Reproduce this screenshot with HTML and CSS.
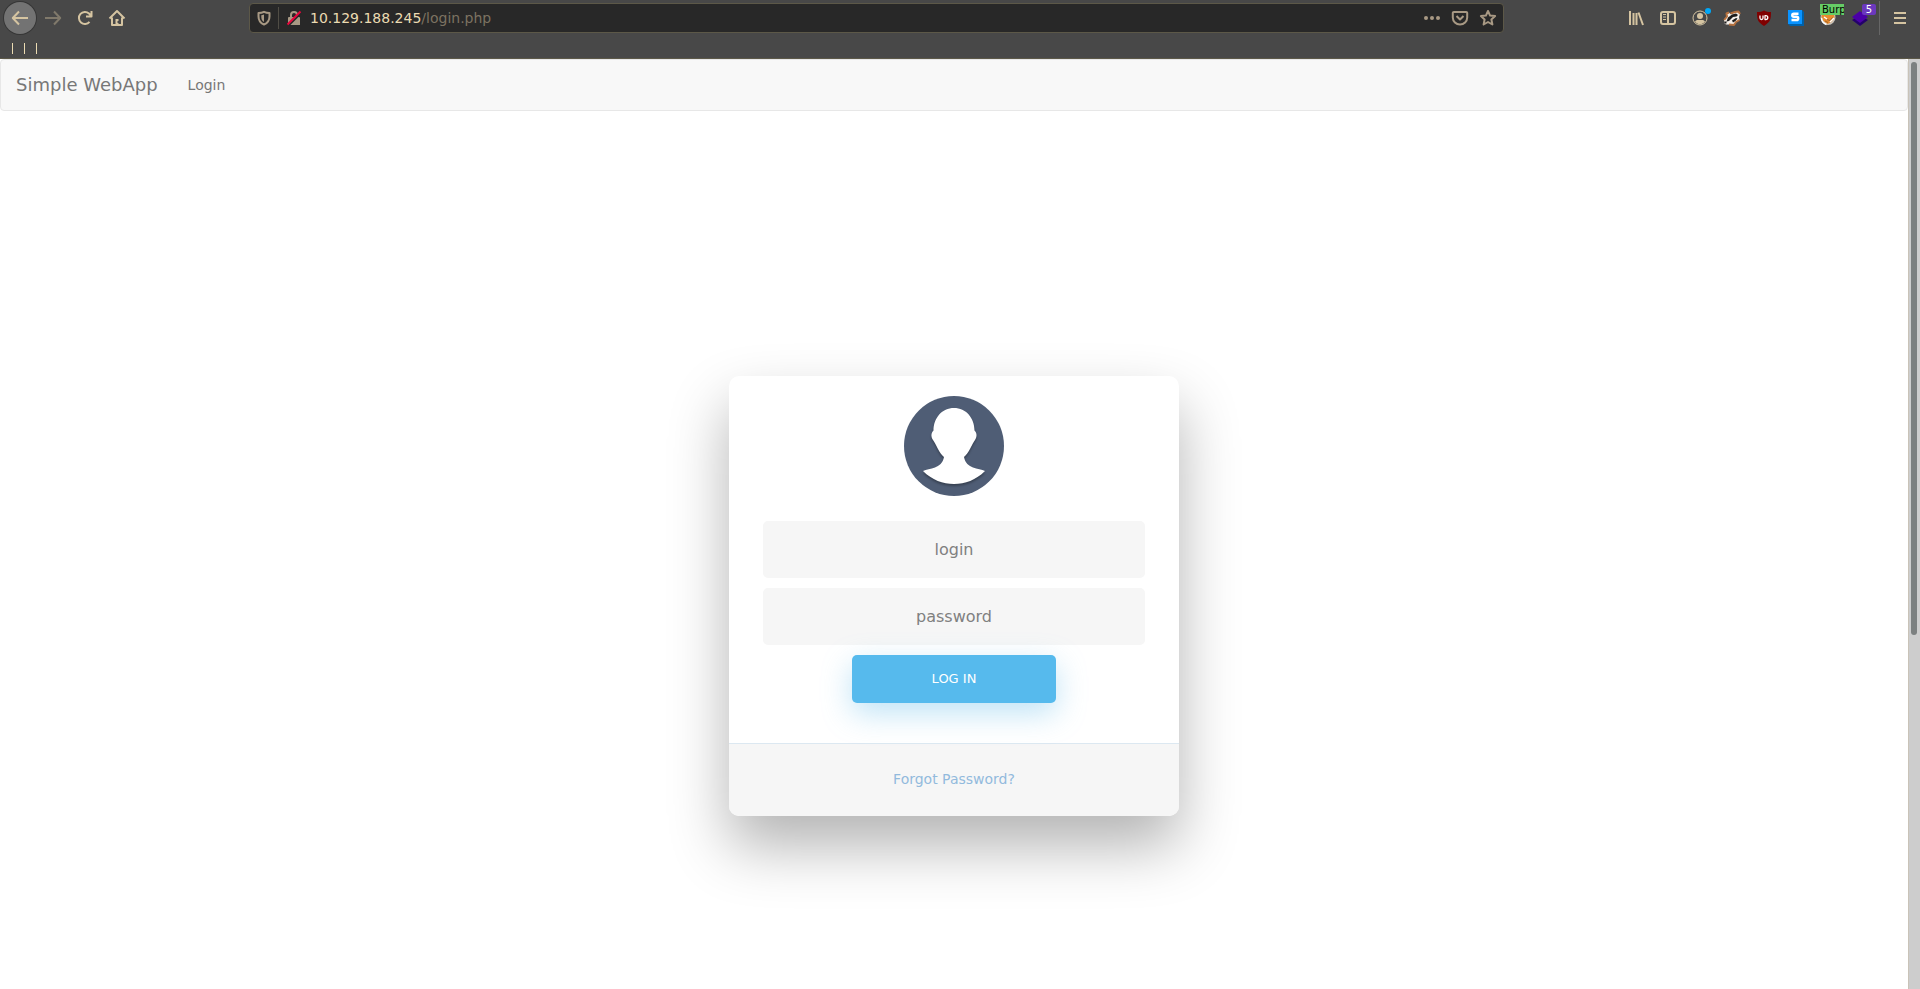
FILE: index.html
```html
<!DOCTYPE html>
<html lang="en">
<head>
  <meta charset="UTF-8">
  <meta name="viewport" content="width=device-width, initial-scale=1.0">
  <title>Simple WebApp - Login</title>
  <link rel="stylesheet" href="styles.css">
</head>
<body>
  <header class="browser">
    <div class="toolbar">
      <button type="button" class="tool tool-back" aria-label="Back">
        <svg width="18" height="18" viewBox="0 0 18 18"><path d="M17 9H2M8 2.500L1.800 9L8 15.500" /></svg>
      </button>
      <button type="button" class="tool tool-off" aria-label="Forward">
        <svg width="18" height="18" viewBox="0 0 18 18"><path d="M1 9h15M10 2.500L16.200 9L10 15.500" /></svg>
      </button>
      <button type="button" class="tool" aria-label="Reload">
        <svg width="18" height="18" viewBox="0 0 18 18"><path d="M13.500 12.800A6 6 0 1 1 13 4.500L15 6.500M15.500 2v5.500H10" /></svg>
      </button>
      <button type="button" class="tool" aria-label="Home">
        <svg width="18" height="18" viewBox="0 0 18 18"><path d="M1.500 9.500L9 2l7.500 7.500M4 8.500V16h10V8.500" /><path class="fill" d="M7.500 10h3v2h-1v2h1v2h-3z" /></svg>
      </button>

      <div class="spacer"></div>
      <div class="urlbar">
        <svg class="url-icon" width="16" height="16" viewBox="0 0 16 16"><path d="M8 1.800C6 2.800 4.500 3 2.500 3v3.500c0 4 1.800 6.500 5.500 8 3.700-1.500 5.500-4 5.500-8V3C11.500 3 10 2.800 8 1.800z" /><path class="fill" d="M8 4.500c-1 .4-1.700.6-2.700.7v1.500c0 2.500.8 4.200 2.700 5.300z" /></svg>
        <span class="url-line"></span>
        <svg class="url-icon" width="16" height="16" viewBox="0 0 16 16"><path d="M5 8V5a3 3 0 0 1 6 0v3" /><path class="fill" d="M3 7h10a1 1 0 0 1 1 1v7H2V8a1 1 0 0 1 1-1z" /><path class="cut" d="M2.500 15.500L15 3" /><path class="slash" d="M1.500 14.500L14.500 1.500" /></svg>
        <div class="url"><span>10.129.188.245</span>/login.php</div>
        <div class="url-actions">
          <svg width="18" height="16" viewBox="0 0 18 16"><circle class="fill" cx="3" cy="8" r="2" /><circle class="fill" cx="9" cy="8" r="2" /><circle class="fill" cx="15" cy="8" r="2" /></svg>
          <svg width="18" height="16" viewBox="0 0 18 16"><path d="M2.800 2h12.400a1 1 0 0 1 1 1v4.500a7.200 7 0 0 1-14.400 0V3a1 1 0 0 1 1-1zM5.500 6L9 9.500 12.500 6" /></svg>
          <svg width="18" height="16" viewBox="0 0 18 16"><path d="M9 1l2.100 4.600 5 .5-3.700 3.400 1 5L9 12l-4.400 2.500 1-5L1.900 6.100l5-.5z" /></svg>
        </div>
      </div>
      <div class="spacer"></div>

      <button type="button" class="tool" aria-label="Library">
        <svg width="18" height="18" viewBox="0 0 18 18"><path d="M3 2v14M6.500 4v12M9.500 4v12M11.500 3.500L16 16" /></svg>
      </button>
      <button type="button" class="tool" aria-label="Sidebars">
        <svg width="18" height="18" viewBox="0 0 18 18"><rect x="2" y="3" width="14" height="12" rx="2" /><path d="M9 3v12" /><path class="thin" d="M4 5.500h3M4 8h3M4 10.500h3" /></svg>
      </button>
      <button type="button" class="tool" aria-label="Account">
        <svg width="18" height="18" viewBox="0 0 18 18"><circle class="thin" cx="9" cy="9" r="7" /><circle class="fill" cx="9" cy="7" r="3" /><path class="fill" d="M4 12.500c1-1.500 2-1.500 3-1.500h4c1 0 2 0 3 1.500a6 6 0 0 1-10 0z" /></svg>
        <span class="dot"></span>
      </button>
      <button type="button" class="tool" aria-label="Privacy Badger">
        <svg class="art" width="18" height="18" viewBox="0 0 18 18">
          <path fill="#f4eee8" d="M1 11.500L4 7L3.500 4.500L6 3.500L7.500 5L12 3L15.500 2.500L17 5L16 8L16.500 11L13 13L11 16L7 15.500L3 15.500L1 14z" />
          <path fill="none" stroke="#b5713f" d="M1.200 11L4 7.500L3.500 4.500L6 3.500M7.500 4.500L12 3L15.500 2.500L17 5M16.500 11L13 13L11 16L6 15.500" />
          <path fill="#1c1c1c" d="M5 8.500L9 5.500L13 4.500L15 6L13.500 7.500L10 8L6 12L3.500 12.500zM9 11.500L13 9L14.500 9.500L12.500 12L10 13.500zM1 12.500h2.500v2H1.500z" />
        </svg>
      </button>
      <button type="button" class="tool" aria-label="uBlock Origin">
        <svg class="art" width="18" height="18" viewBox="0 0 18 18"><path fill="#800000" d="M9 1.500c2 1.200 4 1.500 7 1.500 0 7-.5 10-7 14-6.500-4-7-7-7-14 3 0 5-.3 7-1.500z" /><path fill="none" stroke="#fff" stroke-width="1.300" d="M5 6.500v2.500a1.500 1.500 0 0 0 3 0V6.500M10 6.600v4h.8a2 2 0 0 0 0-4z" /></svg>
      </button>
      <button type="button" class="tool" aria-label="Stylus">
        <svg class="art" width="18" height="18" viewBox="0 0 18 18"><path fill="#0060a8" d="M1 15l2 2h14V3l-2-2z" /><path fill="#0a93ff" d="M1 1h14v14H1z" /><path fill="none" stroke="#fff" stroke-width="2.400" d="M11.500 4.700H6.800a1.500 1.500 0 0 0 0 3.100h2.800a1.500 1.500 0 0 1 0 3.200H4.500" /></svg>
      </button>
      <button type="button" class="tool" aria-label="FoxyProxy">
        <svg class="art" width="18" height="18" viewBox="0 0 18 18">
          <circle cx="9" cy="8.500" r="7.500" fill="#c9c2b8" />
          <path fill="#e98b2c" d="M3 4h12l.5 5-3 4-4 2-4-3-2-4z" />
          <path fill="none" stroke="#fff" stroke-width="1.500" d="M2.500 9c0 3 2 5.500 5 6.500M5 8l3 2M15 9l-4 4" />
          <path fill="none" stroke="#8d5a2a" stroke-width=".8" d="M8 10.500l3 1 2.500-3M6 12l3 1.500" />
        </svg>
        <span class="badge badge-green">Burp</span>
      </button>
      <button type="button" class="tool" aria-label="Cookies">
        <svg class="art" width="18" height="18" viewBox="0 0 18 18"><path fill="#24006b" d="M1 11l8-5 8 5-8 6z" /><path fill="#4b00a8" d="M1 8l8-6 8 6-8 6z" /></svg>
        <span class="badge badge-purple">5</span>
      </button>
      <span class="tool-line"></span>
      <button type="button" class="tool tool-menu" aria-label="Menu">
        <svg width="18" height="18" viewBox="0 0 18 18"><path d="M3 4h12M3 9h12M3 14h12" /></svg>
      </button>
    </div>
    <div class="bookmarks"><i></i><i></i><i></i></div>
  </header>

  <div class="viewport">
    <div class="page">
      <nav class="navbar">
        <a class="navbar-brand" href="#">Simple WebApp</a>
        <a class="navbar-link" href="#">Login</a>
      </nav>

      <main class="wrapper">
        <div class="card">
          <svg class="avatar" viewBox="0 0 100 100">
            <circle cx="50" cy="50" r="50" fill="#4f5d75" />
            <path class="person" d="M50 12C38 12 29.500 22 29.500 34.500C27 37 26.800 40.500 29 44C32 48 35 57 40 61C39 67 35 70 31 71.500C27 73 22 73.500 19 75C28 84 39 88 50 88C61 88 72 84 81 75C78 73.500 73 73 69 71.500C65 70 61 67 60 61C65 57 68 48 71 44C73.200 40.500 73 37 70.500 34.500C70.500 22 62 12 50 12Z" />
          </svg>
          <form>
            <input type="text" name="login" placeholder="login" aria-label="login">
            <input type="password" name="password" placeholder="password" aria-label="password">
            <button type="submit">Log In</button>
          </form>
          <div class="card-footer">
            <a href="#">Forgot Password?</a>
          </div>
        </div>
      </main>
    </div>
    <div class="scrollbar"><div class="thumb"></div></div>
  </div>
</body>
</html>
```
FILE: styles.css
```css
:root {
  --chrome: #484848;
  --cream: #d5c4a1;
  --cream-dim: #a89984;
  --olive: #5c5848;
}

* {
  box-sizing: border-box;
}

body {
  margin: 0;
  height: 100vh;
  display: flex;
  flex-direction: column;
  overflow: hidden;
  font-family: "DejaVu Sans", sans-serif;
  font-size: 14px;
  line-height: 20px;
  background: #fff;
}

a {
  text-decoration: none;
}

/* browser toolbar */
.browser {
  flex: none;
  background: var(--chrome);
  border-bottom: 1px solid var(--olive);
}

.toolbar {
  display: flex;
  align-items: center;
  height: 36px;
  padding: 0 4px;
}

.tool {
  position: relative;
  flex: none;
  display: flex;
  align-items: center;
  justify-content: center;
  width: 32px;
  height: 32px;
  padding: 0;
  border: none;
  background: none;
}

.tool-back {
  margin-right: 1px;
  border-radius: 50%;
  background: #737373;
  box-shadow: 0 0 0 1px #363636;
}

.tool-off {
  opacity: 0.4;
}

.tool svg,
.urlbar svg {
  flex: none;
  fill: none;
  stroke: var(--cream);
  stroke-width: 2;
  stroke-linejoin: round;
}

.urlbar svg {
  stroke: var(--cream-dim);
}

.tool svg .fill {
  fill: var(--cream);
  stroke: none;
}

.tool svg .thin {
  stroke-width: 1;
}

.tool svg.art {
  stroke: none;
}

.urlbar svg .fill {
  fill: var(--cream-dim);
  stroke: none;
}

.urlbar svg .cut {
  stroke: #282828;
}

.urlbar svg .slash {
  stroke: #e8063c;
}

.spacer {
  flex: 10;
}

.urlbar {
  flex: 107;
  display: flex;
  align-items: center;
  height: 30px;
  padding: 0 6px;
  border: 1px solid var(--olive);
  border-radius: 4px;
  background: #282828;
}

.url-line {
  width: 1px;
  height: 22px;
  margin: 0 7px 0 6px;
  background: #504d45;
}

.url {
  flex: 1;
  margin-left: 8px;
  color: #7c7261;
}

.url span {
  color: #ebdbb2;
}

.url-actions {
  display: flex;
  gap: 10px;
}

.dot {
  position: absolute;
  top: 6px;
  right: 5px;
  width: 6px;
  height: 6px;
  border-radius: 50%;
  background: #00a8f8;
}

.badge {
  position: absolute;
  top: 2px;
  right: 0;
  height: 11px;
  overflow: hidden;
  font-family: "DejaVu Sans", sans-serif;
  font-size: 10px;
  line-height: 11px;
}

.badge-green {
  width: 24px;
  padding-left: 2px;
  background: #66cc66;
  color: #000;
  text-align: left;
}

.badge-purple {
  width: 14px;
  border-radius: 2px;
  background: #6b38bd;
  color: #fff;
}

.tool-line {
  width: 1px;
  height: 34px;
  margin: 0 4px 0 3px;
  background: #666;
}

.bookmarks {
  display: flex;
  gap: 11px;
  height: 22px;
  padding: 7px 12px 4px;
}

.bookmarks i {
  width: 1px;
  background: #ebdbb2;
}

/* page */
.viewport {
  flex: 1;
  min-height: 0;
  display: flex;
}

.page {
  flex: 1;
  height: 100%;
  overflow: hidden;
}

.navbar {
  display: flex;
  align-items: center;
  min-height: 52px;
  margin-bottom: 20px;
  padding: 0 15px;
  border: 1px solid #e7e7e7;
  border-radius: 4px;
  background: #f8f8f8;
}

.navbar a {
  color: #777;
}

.navbar-brand {
  font-size: 18px;
}

.navbar-link {
  margin-left: 30px;
}

.wrapper {
  display: flex;
  align-items: center;
  justify-content: center;
  min-height: 100%;
  padding: 20px;
}

.card {
  width: 100%;
  max-width: 450px;
  padding-top: 20px;
  border-radius: 10px;
  background: #fff;
  box-shadow: 0 30px 60px 0 rgba(0, 0, 0, 0.3);
  text-align: center;
}

.avatar {
  display: block;
  width: 100px;
  margin: 0 auto 25px;
}

.person {
  fill: #fff;
  filter: drop-shadow(0 2px 1px rgba(0, 0, 0, 0.3));
}

form {
  display: flex;
  flex-direction: column;
  align-items: center;
  gap: 10px;
  padding-bottom: 40px;
}

input {
  width: 85%;
  height: 57px;
  padding: 15px 32px;
  border: 2px solid #f6f6f6;
  border-radius: 5px;
  background: #f6f6f6;
  font-family: inherit;
  font-size: 16px;
  text-align: center;
}

input::placeholder {
  color: #808080;
}

form button {
  height: 48px;
  padding: 0 80px 2px;
  border: none;
  border-radius: 5px;
  background: #56baed;
  box-shadow: 0 10px 30px 0 rgba(95, 186, 233, 0.4);
  color: #fff;
  font-family: inherit;
  font-size: 13px;
  text-transform: uppercase;
}

.card-footer {
  padding: 25px 25px 27px;
  border-top: 1px solid #dce8f1;
  border-radius: 0 0 10px 10px;
  background: #f6f6f6;
}

.card-footer a {
  color: #92badd;
}

.scrollbar {
  flex: none;
  width: 12px;
  padding: 3px 2px;
  border-left: 1px solid #c9c3b8;
  background: #cdcdcd;
}

.thumb {
  height: 62%;
  width: 6px;
  border-radius: 3px;
  background: #7c8080;
}
```
